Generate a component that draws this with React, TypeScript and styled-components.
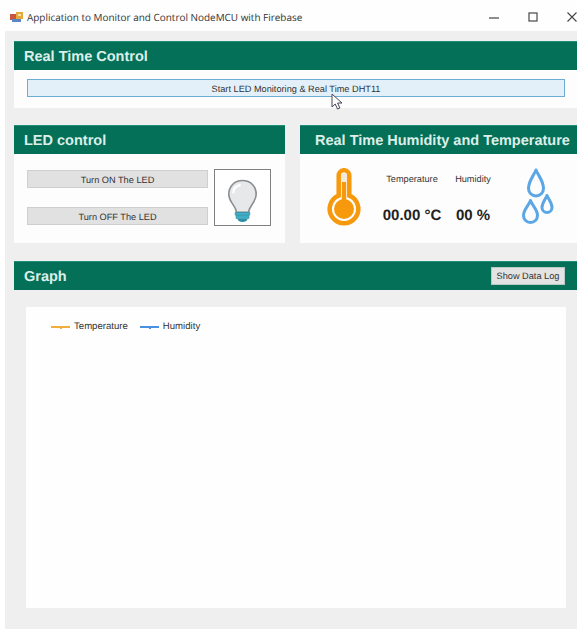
import React from "react";
import styled, { createGlobalStyle } from "styled-components";

const Global = createGlobalStyle`
  html, body { margin: 0; padding: 0; background: #fff; }
  body {
    font-family: "Liberation Sans", Arial, sans-serif;
    overflow: hidden;
    text-rendering: geometricPrecision;
  }
  * { box-sizing: border-box; }
`;

const Win = styled.div`
  position: relative;
  width: 577px;
  height: 629px;
  display: flex;
  flex-direction: column;
  background: #fff;
  overflow: hidden;
`;

const TitleBar = styled.div`
  height: 31px;
  flex: none;
  display: flex;
  align-items: center;
  padding: 3px 0 0 10px;
  background: #fefefe;
`;

const AppIcon = styled.svg`
  width: 13px;
  height: 13px;
  margin-right: 4px;
`;

const TitleText = styled.span`
  font-family: "Open Sans", "Liberation Sans", sans-serif;
  font-size: 9.95px;
  color: #333;
  flex: 1;
`;

const WinControls = styled.div`
  display: flex;
  align-items: center;
  gap: 27px;
  margin-right: -1px;
`;

const Client = styled.div`
  flex: 1;
  margin-left: 5px;
  background: #efefef;
  padding: 10px 0 0 9px;
  display: flex;
  flex-direction: column;
`;

const Band = styled.div<{ $pad?: number }>`
  height: 29px;
  flex: none;
  background: #047058;
  border-top: 1px solid #1f8f7a;
  display: flex;
  align-items: center;
  justify-content: space-between;
  padding-left: ${(p) => p.$pad ?? 10}px;
  padding-right: 12px;
`;

const BandTitle = styled.span`
  font-size: 14.5px;
  font-weight: 700;
  color: #dcefe9;
  white-space: nowrap;
  margin-top: 2px;
`;

const TopBody = styled.div`
  height: 38px;
  background: #fdfdfd;
  padding: 9px 12px 0 13px;
`;

const WideButton = styled.div`
  height: 18px;
  padding-top: 1px;
  background: #e3f0f9;
  border: 1.5px solid #6eaed2;
  display: flex;
  align-items: center;
  justify-content: center;
  font-size: 9.2px;
  color: #333;
`;

const PanelRow = styled.div`
  display: grid;
  grid-template-columns: 271px 277px;
  column-gap: 15px;
  margin-top: 17px;
`;

const Panel = styled.section`
  display: flex;
  flex-direction: column;
  height: 118px;
`;

const LedBody = styled.div`
  flex: 1;
  background: #fdfdfd;
  display: flex;
  padding: 15px 0 0 13px;
`;

const LedButtons = styled.div`
  width: 181px;
  display: flex;
  flex-direction: column;
  gap: 19px;
  padding-top: 1px;
`;

const GrayButton = styled.div`
  height: 18px;
  padding-top: 1px;
  background: #e1e1e1;
  border: 1px solid #cfcfcf;
  display: flex;
  align-items: center;
  justify-content: center;
  font-size: 9.2px;
  color: #333;
`;

const BulbFrame = styled.div`
  width: 57px;
  height: 57px;
  margin-left: 6px;
  border: 1px solid #808080;
  background: #fff;
  display: flex;
  align-items: flex-end;
  justify-content: center;
`;

const ReadBody = styled.div`
  flex: 1;
  background: #fdfdfd;
  display: flex;
  align-items: flex-start;
  padding: 14px 0 0 27px;
`;

const Reading = styled.div<{ $w: number; $ml: number }>`
  display: flex;
  flex-direction: column;
  align-items: center;
  width: ${(p) => p.$w}px;
  margin-left: ${(p) => p.$ml}px;
`;

const ReadLabel = styled.span`
  font-size: 9.2px;
  color: #333;
  margin-top: 6px;
`;

const ReadValue = styled.span`
  font-size: 15px;
  font-weight: 700;
  color: #222;
  margin-top: 23px;
  white-space: nowrap;
`;

const Thermo = styled.svg`
  flex: none;
  width: 34px;
  height: 58px;
`;

const Drops = styled.svg`
  flex: none;
  width: 33px;
  height: 58px;
  margin-left: 32px;
`;

const GraphBand = styled(Band)`
  margin-top: 18px;
`;

const LogButton = styled.div`
  width: 74px;
  height: 18px;
  background: #e3e3e3;
  border: 1px solid #b9c9c4;
  display: flex;
  align-items: center;
  justify-content: center;
  font-size: 9.2px;
  color: #333;
  margin-top: -1px;
`;

const Chart = styled.div`
  width: 540px;
  height: 301px;
  margin: 17px 0 0 12px;
  background: #fefefe;
  padding: 14px 0 0 25px;
`;

const Legend = styled.div`
  display: flex;
  align-items: center;
  font-size: 9.6px;
  color: #333;
`;

const LegendLine = styled.span<{ $c: string }>`
  position: relative;
  width: 19px;
  height: 2px;
  margin-right: 4px;
  background: ${(p) => p.$c};

  &::after {
    content: "";
    position: absolute;
    left: 9px;
    top: 0;
    width: 2px;
    height: 3px;
    background: ${(p) => p.$c};
  }
`;

const LegendLabel = styled.span<{ $gap: number }>`
  margin-right: ${(p) => p.$gap}px;
`;

const Pointer = styled.svg`
  position: absolute;
  left: 331px;
  top: 93px;
  width: 13px;
  height: 17px;
`;

export default function App() {
  return (
    <Win>
      <Global />
      <TitleBar>
        <AppIcon viewBox="0 0 13 13">
          <rect x="0" y="3" width="6" height="6" fill="#c9553f" />
          <rect x="6" y="1" width="7" height="7" fill="#e8a93c" />
          <rect x="2" y="8" width="9" height="3" fill="#5b87c4" />
          <rect x="8" y="3" width="3" height="2" fill="#f6e2a8" />
        </AppIcon>
        <TitleText>Application to Monitor and Control NodeMCU with Firebase</TitleText>
        <WinControls>
          <svg width="12" height="12" viewBox="0 0 12 12">
            <path d="M1 7h10" stroke="#444" strokeWidth="1.2" />
          </svg>
          <svg width="12" height="12" viewBox="0 0 12 12">
            <rect x="2" y="2" width="8" height="8" fill="none" stroke="#555" strokeWidth="1.3" />
          </svg>
          <svg width="12" height="12" viewBox="0 0 12 12">
            <path d="M1.5 1.5l9 9M10.5 1.5l-9 9" stroke="#444" strokeWidth="1.1" />
          </svg>
        </WinControls>
      </TitleBar>

      <Client>
        <Band>
          <BandTitle>Real Time Control</BandTitle>
        </Band>
        <TopBody>
          <WideButton>Start LED Monitoring &amp; Real Time DHT11</WideButton>
        </TopBody>

        <PanelRow>
          <Panel>
            <Band>
              <BandTitle>LED control</BandTitle>
            </Band>
            <LedBody>
              <LedButtons>
                <GrayButton>Turn ON The LED</GrayButton>
                <GrayButton>Turn OFF The LED</GrayButton>
              </LedButtons>
              <BulbFrame>
                {/* glass, highlight and the three-part teal screw base */}
                <svg width="31" height="47" viewBox="0 0 34 50">
                  <path
                    d="M17 2C8 2 2 8.500 2 17c0 5 2.500 8.500 5 12 1.800 2.500 3 5 3.400 8h13.200c.4-3 1.600-5.500 3.400-8 2.500-3.500 5-7 5-12C32 8.500 26 2 17 2z"
                    fill="#e7e8ea"
                    stroke="#8a8e90"
                    strokeWidth="1.8"
                  />
                  <path d="M7 15c0-4 3-7 7-8" fill="none" stroke="#fff" strokeWidth="2.500" strokeLinecap="round" />
                  <path d="M9 37h16v3H9z" fill="#3fb1c9" stroke="#2b8ea5" strokeWidth="0.8" />
                  <path d="M10 40.500h14v3H10z" fill="#3fb1c9" stroke="#2b8ea5" strokeWidth="0.8" />
                  <path d="M11.500 44h11c0 2.200-2 3.500-5.500 3.500S11.500 46.200 11.500 44z" fill="#2b8ea5" />
                </svg>
              </BulbFrame>
            </LedBody>
          </Panel>

          <Panel>
            <Band $pad={15}>
              <BandTitle>Real Time Humidity and Temperature</BandTitle>
            </Band>
            <ReadBody>
              {/* thick outline, pale cap inside the stem, solid mercury column and bulb */}
              <Thermo viewBox="0 0 34 58">
                <path
                  d="M11.700 27.700V7.500a5.300 5.300 0 0 1 10.600 0V27.700a14.300 14.300 0 1 1-10.600 0z"
                  fill="#fff"
                  stroke="#f7990c"
                  strokeWidth="4.500"
                />
                <path d="M14 14V7.500a3 3 0 0 1 6 0V14z" fill="#f3ead9" />
                <rect x="14.750" y="14" width="4.500" height="20" fill="#f7990c" />
                <circle cx="17" cy="41" r="10" fill="#f7990c" />
              </Thermo>
              <Reading $w={64} $ml={19}>
                <ReadLabel>Temperature</ReadLabel>
                <ReadValue>00.00 °C</ReadValue>
              </Reading>
              <Reading $w={34} $ml={12}>
                <ReadLabel>Humidity</ReadLabel>
                <ReadValue>00 %</ReadValue>
              </Reading>
              <Drops viewBox="0 0 33 58">
                <g fill="none" stroke="#5ba7e6" strokeWidth="3" strokeLinejoin="round">
                  <path d="M14 2C11.500 8 6.500 13 6.500 20.500a7.500 7.500 0 0 0 15 0C21.500 13 16.500 8 14 2z" />
                  <path d="M8.500 32.500C6.500 38 1.500 41.500 1.500 47.500a7 7 0 0 0 14 0C15.500 41.500 10.500 38 8.500 32.500z" />
                  <path d="M25 27.500C23.500 31.500 20 34.500 20 39.500a5 5 0 0 0 10 0c0-5-3.500-8-5-12z" />
                </g>
              </Drops>
            </ReadBody>
          </Panel>
        </PanelRow>

        <GraphBand>
          <BandTitle>Graph</BandTitle>
          <LogButton>Show Data Log</LogButton>
        </GraphBand>

        <Chart>
          <Legend>
            <LegendLine $c="#f2ae3a" />
            <LegendLabel $gap={12}>Temperature</LegendLabel>
            <LegendLine $c="#4a90e2" />
            <LegendLabel $gap={0}>Humidity</LegendLabel>
          </Legend>
        </Chart>
      </Client>

      <Pointer viewBox="0 0 13 17">
        <path d="M1 1v13l3.200-3 2.300 5 2.400-1-2.300-5H11z" fill="#fff" stroke="#445" strokeWidth="1" />
      </Pointer>
    </Win>
  );
}
